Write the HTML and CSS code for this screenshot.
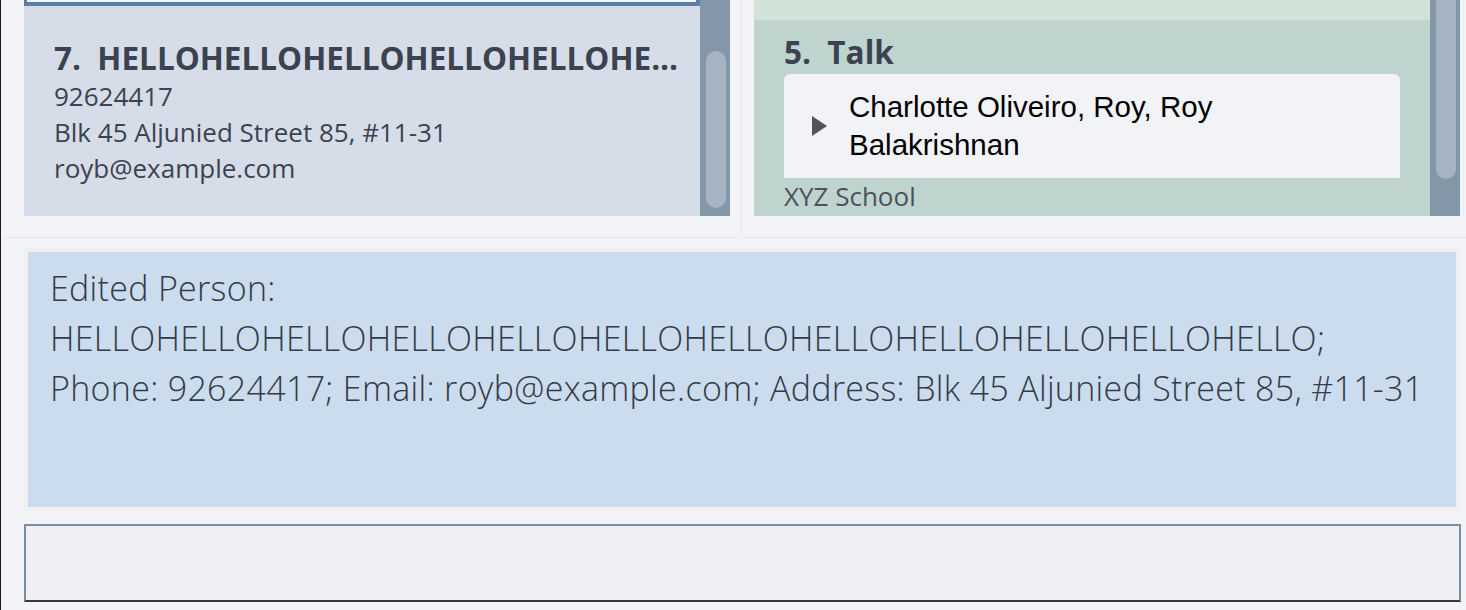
FILE: index.html
```html
<!DOCTYPE html>
<html>
<head>
<meta charset="utf-8">
<link rel="stylesheet" href="styles.css">
</head>
<body>
<div class="app">
  <div class="top-row">
    <div class="pane pane-left">
      <div class="list">
        <div class="card-tail selected-tail"></div>
        <div class="person-card">
          <div class="card-name">7.&nbsp;&nbsp;HELLOHELLOHELLOHELLOHELLOHE...</div>
          <div class="card-line">92624417</div>
          <div class="card-line">Blk 45 Aljunied Street 85, #11-31</div>
          <div class="card-line">royb@example.com</div>
        </div>
      </div>
      <div class="scrollbar"><div class="thumb thumb-left"></div></div>
    </div>
    <div class="pane pane-right">
      <div class="list">
        <div class="card-tail green-tail"></div>
        <div class="event-card">
          <div class="card-name">5.&nbsp;&nbsp;Talk</div>
          <div class="attendees">
            <span class="arrow"></span>
            <div class="attendee-text">Charlotte Oliveiro, Roy, Roy<br>Balakrishnan</div>
          </div>
          <div class="card-line org">XYZ School</div>
        </div>
      </div>
      <div class="scrollbar"><div class="thumb thumb-right"></div></div>
    </div>
  </div>
  <div class="result-area">
    <div class="result-frame">
      <div class="result-box">
        <div class="result-line">Edited Person:</div>
        <div class="result-line">HELLOHELLOHELLOHELLOHELLOHELLOHELLOHELLOHELLOHELLOHELLOHELLO;</div>
        <div class="result-line">Phone: 92624417; Email: royb@example.com; Address: Blk 45 Aljunied Street 85, #11-31</div>
      </div>
    </div>
  </div>
  <div class="command-area">
    <div class="command-box"></div>
  </div>
</div>
</body>
</html>
```

FILE: styles.css
```css
html, body {
  margin: 0;
  padding: 0;
}
body {
  background: #f3f4f7;
  width: 1466px;
  height: 610px;
  overflow: hidden;
  font-family: "Open Sans", "DejaVu Sans", sans-serif;
}
.app {
  border-left: 1px solid #1a1a1a;
  height: 610px;
  box-sizing: border-box;
  display: flex;
  flex-direction: column;
}
.top-row {
  display: flex;
  height: 239px;
  box-sizing: border-box;
  border-bottom: 3px solid #eef0f3;
}
.pane {
  display: flex;
  align-items: flex-start;
  height: 216px;
}
.pane-left {
  padding-left: 23px;
  padding-right: 10px;
  border-right: 3px solid #eceef2;
  height: 236px;
  box-sizing: border-box;
}
.pane-right {
  padding-left: 11px;
  padding-right: 3px;
  border-right: 1px solid #eceef2;
}
.list {
  width: 676px;
  height: 216px;
  overflow: hidden;
  display: flex;
  flex-direction: column;
}
.card-tail {
  flex: none;
}
.selected-tail {
  height: 6px;
  box-sizing: border-box;
  background: #f3f5f8;
  border: 4px solid #5b7ea9;
  border-top: none;
  border-left-width: 3px;
}
.green-tail {
  height: 20px;
  background: #d1e2d9;
}
.person-card {
  flex: 1;
  background: #d6dde8;
  padding: 32px 20px 0 30px;
  color: #3b4250;
  overflow: hidden;
}
.card-name {
  font-weight: 700;
  font-size: 31.5px;
  line-height: 40px;
  white-space: nowrap;
  color: #3b4250;
}
.card-line {
  font-size: 26px;
  line-height: 36px;
  white-space: nowrap;
  color: #3b4350;
}
.event-card {
  flex: 1;
  background: #bfd4cf;
  padding: 12px 30px 0 30px;
  overflow: hidden;
}
.attendees {
  margin-top: 2px;
  background: #f2f3f7;
  border-radius: 6px 6px 0 0;
  height: 104px;
  box-sizing: border-box;
  padding: 14px 20px 14px 28px;
  display: flex;
  align-items: center;
  gap: 22px;
}
.arrow {
  flex: none;
  width: 0;
  height: 0;
  border-top: 10px solid transparent;
  border-bottom: 10px solid transparent;
  border-left: 15px solid #555555;
}
.attendee-text {
  font-family: "Liberation Sans", Arial, sans-serif;
  font-size: 29.5px;
  line-height: 38px;
  color: #000000;
}
.org {
  color: #4a525c;
}
.scrollbar {
  width: 30px;
  height: 216px;
  background: #8497a9;
  position: relative;
  flex: none;
}
.thumb {
  position: absolute;
  left: 6px;
  width: 20px;
  background: #a4b4c2;
  border-radius: 10px;
}
.thumb-left {
  top: 51px;
  height: 157px;
}
.thumb-right {
  top: -20px;
  height: 199px;
}
.result-area {
  padding: 9px 6px 0 23px;
}
.result-frame {
  border: 4px solid #eef0f4;
}
.result-box {
  background: #cadcee;
  height: 255px;
  box-sizing: border-box;
  padding: 11px 10px 0 22px;
}
.result-line {
  font-weight: 300;
  font-size: 34px;
  line-height: 50px;
  letter-spacing: 0.3px;
  color: #333b47;
  white-space: nowrap;
}
.command-area {
  padding: 13px 5px 0 23px;
}
.command-box {
  height: 78px;
  box-sizing: border-box;
  background: #eef0f5;
  border: 2px solid #7a8fa5;
  border-bottom-color: #383838;
}
```
